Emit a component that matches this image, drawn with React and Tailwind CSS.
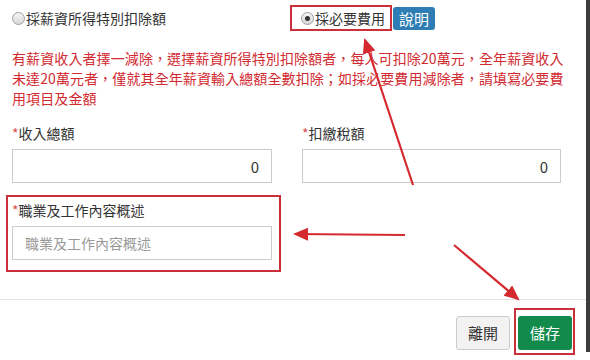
import { useState } from "react";

const font = { fontFamily: '"Microsoft JhengHei", "Noto Sans CJK TC", "Liberation Sans", sans-serif' };

const Radio = ({ checked, onClick }) => (
  <span
    onClick={onClick}
    className="inline-flex h-[13px] w-[13px] items-center justify-center rounded-full border border-[#a0a0a0] bg-gradient-to-b from-[#f4f4f4] to-[#d8d8d8] mr-[1px] cursor-pointer"
  >
    {checked && <span className="h-[5px] w-[5px] rounded-full bg-[#333]" />}
  </span>
);

const Label = ({ children }) => (
  <div className="text-[14px] leading-5 text-[#333] mb-[6px]">
    <span className="text-[#d9534f]">*</span>
    {children}
  </div>
);

export default function App() {
  const [mode, setMode] = useState("expense");

  return (
    <div className="relative flex h-[360px] w-[590px] overflow-hidden bg-white" style={font}>
      <div className="flex flex-1 flex-col">
        <div className="flex flex-col px-3 pt-[5px]">
          {/* radio row */}
          <div className="flex items-center">
            <label className="flex w-[278px] items-center text-[14px] text-[#333]">
              <Radio checked={mode === "salary"} onClick={() => setMode("salary")} />
              採薪資所得特別扣除額
            </label>
            <div className="flex items-center">
              <label className="flex h-[26px] items-center border-2 border-[#c9303a] pl-[9px] pr-[5px] text-[14px] text-[#333]">
                <Radio checked={mode === "expense"} onClick={() => setMode("expense")} />
                採必要費用
              </label>
              <button className="ml-[1px] h-[23px] rounded-[3px] bg-[#2e7db4] px-[6px] text-[15px] leading-[23px] text-white">
                說明
              </button>
            </div>
          </div>

          {/* note */}
          <p className="mt-[17px] whitespace-nowrap text-[14px] leading-[20px] tracking-[0.1px] text-[#d22a30]">
            有薪資收入者擇一減除，選擇薪資所得特別扣除額者，每人可扣除20萬元，全年薪資收入
            <br />
            未達20萬元者，僅就其全年薪資輸入總額全數扣除；如採必要費用減除者，請填寫必要費
            <br />
            用項目及金額
          </p>

          {/* amounts */}
          <div className="mt-[15px] grid grid-cols-[260px_259px] gap-x-[30px]">
            <div>
              <Label>收入總額</Label>
              <input
                defaultValue="0"
                className="h-[34px] w-full border border-[#ccc] px-3 text-right text-[15px] text-[#333] outline-none"
              />
            </div>
            <div>
              <Label>扣繳稅額</Label>
              <input
                defaultValue="0"
                className="h-[34px] w-full border border-[#ccc] px-3 text-right text-[15px] text-[#333] outline-none"
              />
            </div>
          </div>

          {/* job description */}
          <div className="-mx-[6px] mt-[12px] w-[275px] border-2 border-[#c9303a] px-[4px] pb-[10px] pt-[3px]">
            <Label>職業及工作內容概述</Label>
            <input
              placeholder="職業及工作內容概述"
              className="h-[34px] w-[260px] border border-[#ccc] px-3 text-[14px] text-[#333] outline-none placeholder:text-[#999]"
            />
          </div>
        </div>

        {/* footer */}
        <div className="mt-[27px] flex items-start justify-end gap-[4px] border-t border-[#e5e5e5] pr-[11px] pt-[8px]">
          <button className="mt-[8px] h-[34px] w-[54px] rounded-[3px] border border-[#ccc] bg-[#f2f2f2] text-[15px] text-[#333]">
            離開
          </button>
          <div className="border-2 border-[#c9303a] pb-[3px] pl-[2px] pr-[1px] pt-[6px]">
            <button className="h-[34px] w-[54px] rounded-[3px] bg-[#128a4b] text-[15px] text-white">
              儲存
            </button>
          </div>
        </div>
      </div>
      <div className="h-[352px] w-[4px] bg-[#3c3c3c]" />

      {/* annotation arrows */}
      <svg className="pointer-events-none absolute inset-0" width="590" height="360">
        <defs>
          <marker id="ah" markerWidth="7" markerHeight="6" refX="6" refY="3" orient="auto" markerUnits="strokeWidth">
            <path d="M0,0 L7,3 L0,6 Z" fill="#d42a2f" />
          </marker>
        </defs>
        <g stroke="#d42a2f" strokeWidth="2.2" fill="none">
          <line x1="413" y1="185" x2="365" y2="40" markerEnd="url(#ah)" />
          <line x1="405" y1="235" x2="295" y2="234" markerEnd="url(#ah)" />
          <line x1="454" y1="245" x2="518" y2="299" markerEnd="url(#ah)" />
        </g>
      </svg>
    </div>
  );
}
